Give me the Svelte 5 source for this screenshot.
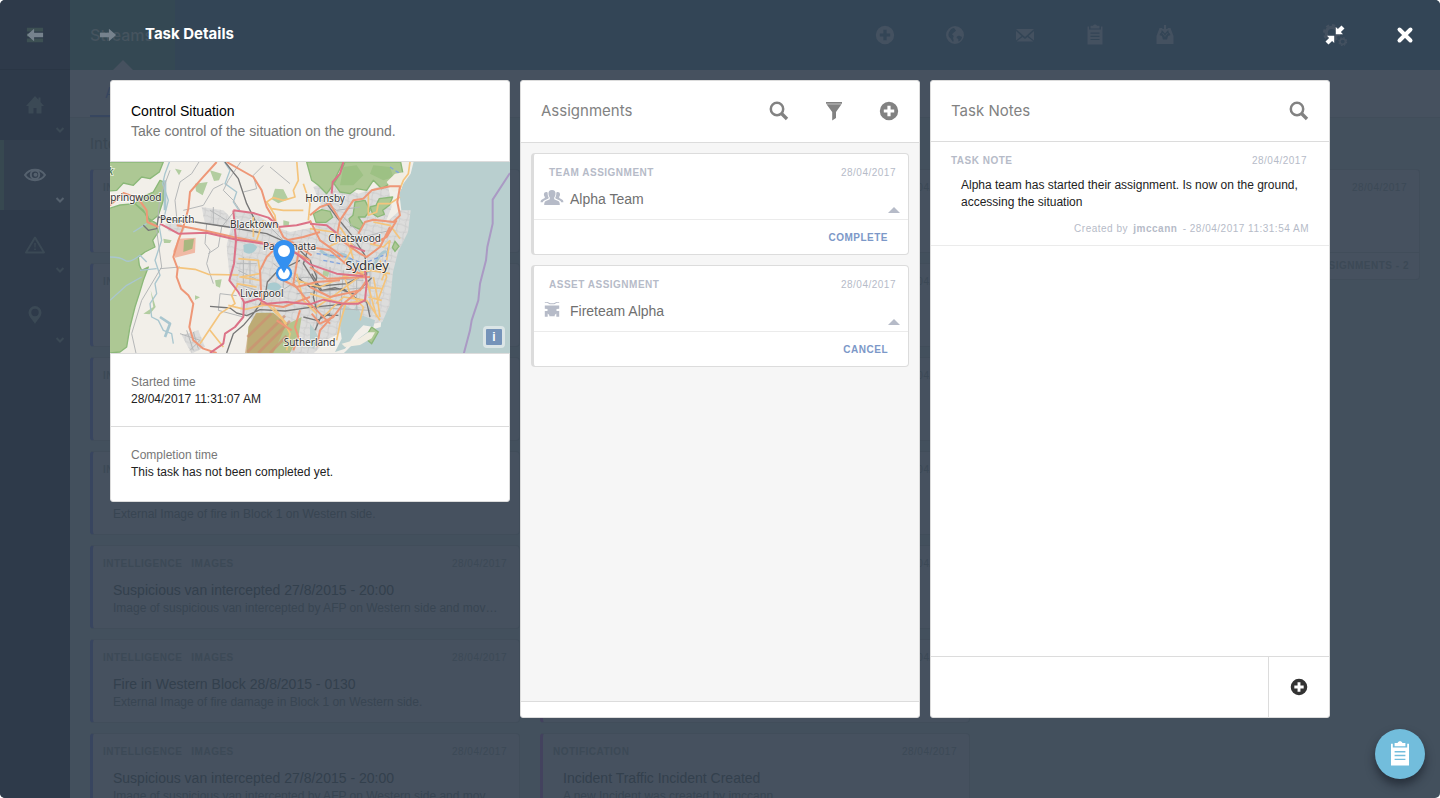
<script>
  const intel = ['INTELLIGENCE', 'IMAGES'];
  const van = {
    tags: intel,
    title: 'Suspicious van intercepted 27/8/2015 - 20:00',
    text: 'Image of suspicious van intercepted by AFP on Western side and moved to the depot.'
  };
  const fire = {
    tags: intel,
    title: 'Fire in Western Block 28/8/2015 - 0130',
    text: 'External Image of fire damage in Block 1 on Western side.'
  };
  const block = {
    tags: intel,
    title: 'Fire in Western Block',
    text: 'External Image of fire in Block 1 on Western side.'
  };
  const incident = {
    tags: ['NOTIFICATION'],
    title: 'Incident Traffic Incident Created',
    text: 'A new Incident was created by jmccann'
  };

  const streams = [
    { name: 'Intelligence', kind: 'intel', cards: [van, fire, van, block, van, fire, van] },
    { name: 'Notifications', kind: 'notice', cards: Array(7).fill(incident) },
    {
      name: 'Tasks',
      kind: 'task',
      cards: [{ tags: ['TASK'], title: 'Control Situation', text: 'Take control of the situation on the ground.', footer: 'ASSIGNMENTS - 2' }]
    }
  ];

  const assignments = [
    { type: 'TEAM ASSIGNMENT', name: 'Alpha Team', icon: 'team', action: 'COMPLETE' },
    { type: 'ASSET ASSIGNMENT', name: 'Fireteam Alpha', icon: 'asset', action: 'CANCEL' }
  ];

  const date = '28/04/2017';
  const navItems = ['home', 'eye', 'warning', 'pin'];
  const tools = ['plus', 'globe', 'mail', 'clipboard', 'inbox'];
  let note = $state('');
</script>

{#snippet icon(name, size = 20)}
  <svg class="icon" width={size} height={size} viewBox="0 0 20 20" fill="currentColor" aria-hidden="true">
    {#if name === 'menu'}
      <path d="M1 2h18v4H1zM1 8h18v4H1zM1 14h18v4H1z" />
    {:else if name === 'home'}
      <path d="M10 1 13.500 4.800V2.500h2v4.500L19 11h-2.500v7.500h-5V13h-3v5.500h-5V11H1z" />
    {:else if name === 'eye'}
      <path d="M0 10C4.500 3 15.500 3 20 10 15.500 17 4.500 17 0 10z" fill="none" stroke="currentColor" stroke-width="2" />
      <circle cx="10" cy="9.800" r="4.200" fill="none" stroke="currentColor" stroke-width="2" />
      <circle cx="10.500" cy="9.800" r="2" />
    {:else if name === 'warning'}
      <path d="M10 2.500 19 17.500H1z" fill="none" stroke="currentColor" stroke-width="2" stroke-linejoin="round" />
      <path d="M9.200 8h1.600l-.3 4.500h-1zM9.200 13.500h1.600v1.600H9.200z" />
    {:else if name === 'pin'}
      <path fill-rule="evenodd" d="M10 1a6.500 6.500 0 0 1 6.500 6.500C16.500 12 12 15 10 19 8 15 3.500 12 3.500 7.500A6.500 6.500 0 0 1 10 1zm0 2.800a3.700 3.700 0 1 0 0 7.400 3.700 3.700 0 0 0 0-7.400z" />
    {:else if name === 'plus'}
      <path fill-rule="evenodd" d="M10 .8a9.200 9.200 0 1 1 0 18.400A9.200 9.200 0 0 1 10 .8zM8.400 4.800v3.600H4.800v3.200h3.600v3.600h3.200v-3.600h3.600V8.400h-3.600V4.800z" />
    {:else if name === 'globe'}
      <path fill-rule="evenodd" d="M10 1a9 9 0 1 1 0 18 9 9 0 0 1 0-18zM5 5.500C3 8 3 11 4.500 12.500c1.500 1 2 2.500 3.500 4.500 1-1 .5-2.500 0-4 1-1.500 1-2.500-1-3.500 1-2 3-2.500 4-4L9 3C7.500 3 6 4 5 5.500zM13 11c-1.500.5-2 2-.5 2.500s.5 2 1 3c2-1 3-2.500 3.500-4.500-1.500-.5-2.500-1.500-4-1z" />
    {:else if name === 'mail'}
      <path d="M1 4h18l-9 8zM1 6l5.500 5L1 15.500zM19 6l-5.500 5 5.500 4.500zM7.500 12l2.500 2 2.500-2 6 4.500h-17z" />
    {:else if name === 'clipboard'}
      <path fill-rule="evenodd" d="M2.500 1.500h1.500V4.500h12V1.500h1.500v18h-15zM5.500 7.500v1.200h9V7.500zm0 3.200v1.200h9v-1.200zm0 3.200v1.200h9v-1.200z" />
      <path d="M5.500.8h2.500C8.500-1 11.500-1 12 .8h2.500v2.700h-9z" />
    {:else if name === 'inbox'}
      <path fill-rule="evenodd" d="M4.500 3h3l-1.500 5h2l2 3 2-3h2l-1.500-5h3l3 8v8h-17v-8zM4.500 10l2.500 1 1 3.500h4l1-3.500 2.500-1-1-2h-1.500L10 12 7 8H5.500z" />
      <path d="M8.900 0h2.200v4H14l-4 4.500L6 4h2.900z" />
    {:else if name === 'search'}
      <circle cx="8" cy="8" r="6.200" fill="none" stroke="currentColor" stroke-width="2.500" />
      <path d="m12.500 12.500 5.500 5.500" stroke="currentColor" stroke-width="3.400" />
    {:else if name === 'filter'}
      <path d="M2 1h16v1.800H2zM2.500 3.200h15L12 11v6l-3.800 2.500V11z" />
    {:else if name === 'left' || name === 'right'}
      <path transform={name === 'right' ? 'rotate(180 10 10)' : null} d="M1 10 9 3v4.500h10v5H9V17z" />
    {:else if name === 'chevron'}
      <path d="m3 6 7 7 7-7" fill="none" stroke="currentColor" stroke-width="4" />
    {:else if name === 'close'}
      <path d="m4.500 4.500 11 11m0-11-11 11" stroke="currentColor" stroke-width="4" stroke-linecap="round" />
    {:else if name === 'compress'}
      <path d="M10.800 9.200V2l2.100 2.100L16.500.5l3 3-3.600 3.600L18 9.200zM9.200 10.800V18l-2.100-2.100-3.600 3.600-3-3 3.600-3.600L2 10.800z" />
    {:else if name === 'gears'}
      <circle cx="7" cy="8" r="5" fill="none" stroke="currentColor" stroke-width="3" />
      <circle cx="7" cy="8" r="7" fill="none" stroke="currentColor" stroke-width="2" stroke-dasharray="3 2.500" />
      <circle cx="17" cy="16" r="2.500" fill="none" stroke="currentColor" stroke-width="1.500" />
      <circle cx="17" cy="16" r="3.500" fill="none" stroke="currentColor" stroke-width="1.200" stroke-dasharray="1.500 1.250" />
    {:else if name === 'asset'}
      <path d="M2 1h3l3 1.500h4L15 1h3v1h-2.500l-3 1.700h-5L4.500 2H2zM2 5h16v3.500l-3 .5v2h3v6.500h-3.200V14L13 15.500V17H7v-1.500L5.200 14v3.500H2V11h3V9l-3-.5z" />
    {/if}
  </svg>
{/snippet}

<div class="app">
  <div class="shell" aria-hidden="true">
    <nav class="sidebar">
      <div class="brand">{@render icon('menu', 18)}</div>
      {#each navItems as item (item)}
        <div class="nav-item" class:active={item === 'eye'}>
          {@render icon(item)}
          <span class="more">{@render icon('chevron', 10)}</span>
        </div>
      {/each}
    </nav>

    <div class="main">
      <header class="topbar">
        <div class="section-tab">Streams</div>
        <div class="tools">
          {#each tools as tool (tool)}
            <span class="tool">{@render icon(tool)}</span>
          {/each}
        </div>
        <span class="tool settings">{@render icon('gears', 22)}</span>
      </header>
      <div class="subtabs"><span class="subtab">All</span></div>
      <div class="streams">
        {#each streams as stream (stream.name)}
          <section class="stream {stream.kind}">
            <h2>{stream.name}</h2>
            {#each stream.cards as card}
              <article class="card">
                <div class="card-body">
                  <div class="meta">
                    <b>{#each card.tags as tag}<span class="tag">{tag}</span>{/each}</b>
                    <span>{date}</span>
                  </div>
                  <h3>{card.title}</h3>
                  <p>{card.text}</p>
                </div>
                {#if card.footer}<div class="card-footer">{card.footer}</div>{/if}
              </article>
            {/each}
          </section>
        {/each}
      </div>
    </div>
  </div>

  <div class="overlay" role="dialog" aria-labelledby="dialog-title">
    <header class="dialog-bar">
      <button class="bar-btn muted" aria-label="Back">{@render icon('left', 18)}</button>
      <button class="bar-btn forward muted" aria-label="Forward">{@render icon('right', 18)}</button>
      <h1 id="dialog-title">Task Details</h1>
      <button class="bar-btn end" aria-label="Collapse">{@render icon('compress', 20)}</button>
      <button class="bar-btn" aria-label="Close">{@render icon('close', 20)}</button>
    </header>

    <main class="panels">
      <section class="panel details">
        <div class="summary">
          <h2>Control Situation</h2>
          <p>Take control of the situation on the ground.</p>
        </div>
        <div class="map">
          <svg class="map-art" viewBox="0 5 1200 573" preserveAspectRatio="xMidYMid slice" role="img" aria-label="Map of Sydney">
            <defs>
              <pattern id="streets" width="46" height="38" patternUnits="userSpaceOnUse" patternTransform="rotate(12)">
                <path d="M0 9 20 6 46 12M0 27 24 30 46 25M12 0 9 18 14 38M33 0 36 20 31 38" fill="none" stroke="#c8c8c8" stroke-width="2" />
              </pattern>
              <path id="urban" d="M275 140 340 150 380 190 370 205 285 190zM165 190l40-8 20 20-8 18-42-8zM375 150l60 10 65 40 40 15 75-15 20-60-25-60 45-20 90 40 60-20 30 0 10 60-20 50 45-40 32 0-8 65-30 60-15 60-10 100-22 50-52 10-20-50-30 60-60 30-60 60-75-10-40-30-60-50 10-70-70-70-10-110zM400 390l50-10 30 60-50 40-40-25zM215 525l50-15 20 50-40 20z" />
            </defs>
            <rect width="1200" height="600" fill="#f2efe9" />
            <!-- sea -->
            <path d="M912 0 902 40 880 70 868 100 874 150 882 165 862 185 858 210 845 250 842 305 828 330 830 365 815 380 820 430 812 500 780 510 745 535 700 580 700 600H1200V0z" fill="#b9cfcf" />
            <!-- built-up areas -->
            <use href="#urban" fill="#dddddc" />
            <use href="#urban" fill="url(#streets)" />
            <!-- parkland -->
            <g fill="#adc894" stroke="#8bb878" stroke-width="4" stroke-linejoin="round">
              <path d="M-5 5H160L148 35 120 55 95 50 70 75 40 68 20 90-5 92zM150 60 162 65 160 120 145 165 120 185 112 165 75 130 95 110 130 95zM-5 145 30 134 75 130 100 150 112 172 140 190 145 215 128 240 135 260 105 275 85 290 88 315 95 330 115 320 100 360 88 400 75 440 60 500 50 560 30 575-5 578z" />
              <path d="M590 5H700L680 45 665 80 650 100 625 75 605 60zM705 5H872L880 45 865 75 840 70 815 85 790 60 770 90 740 85 720 100 690 95 672 70 690 40zM735 125l30-5 15 30-15 20-20 0 15 22-10 15-28-12-5-20 12-10z" />
              <path d="M610 160l25-12 25 5 8 18-20 15-30 0zM780 140l18-5 10-20 40-5-10 25-20 15 5 12-20 8-15-10z" />
            </g>
            <path d="M440 457H490L510 475 535 490 575 470 565 530 540 578H410L415 500z" fill="#b5c48c" />
            <path d="M700 20l40-5 20 30-30 30-40 0zM790 15l50 5 10 30-30 10-40-20z" fill="#9dc184" />
            <path d="M785 500l20 15-20 35-12-10 3-25zM855 243l12 15-12 15-8-12z" fill="#adc894" stroke="#8bb878" stroke-width="4" />
            <g fill="#b2cda0">
              <path d="M300 30l35 10-8 20-15 2zM255 70l38-5-15 40-20-12zM100 460l30-20-8-50 15 50-18 22zM315 360l20-3-5 25-12-5zM160 235l25 5-5 8-18 0zM195 25l20 5-8 15zM255 405l15 6-15 8z" />
              <path d="M495 85l25 2 15 30-30 12-20-12zM640 330l18 4-4 16-16-6zM520 180l18 4-2 14-16-2z" />
            </g>
            <path d="M205 235l52-3-2 45-60 15-5-20z" fill="#f0b9a4" />
            <path d="M222 240l30-5-5 30-27 10z" fill="#a9b77f" />
            <path d="M438 458H490L530 490 490 578H405l12-80z" fill="#c39b65" opacity=".6" />
            <g stroke="#cd8f72" stroke-width="8" opacity=".7">
              <path d="M412 575 525 466M445 578 540 482M480 578 530 527M412 530 484 460" />
            </g>
            <!-- inland water -->
            <g fill="none" stroke="#a9c6cf" stroke-width="4" stroke-linejoin="round">
              <path d="M180 0 165 40 158 70 175 120 165 160 148 200 155 240 135 300 150 345 135 370 140 400 120 430 125 470 145 480 160 510 185 520 190 550M340 0l20 30-15 40 35 25-10 30 20 30M0 290q30 0 45 10t45-15l20 20M0 420 50 375 95 350M90 330l50-5M70 215l40-25" />
              <path d="M165 60v90M150 470l30 20-15 40" stroke-width="8" />
              <path d="M630 270q40 30 55 15t50 30 60-5 40-30" stroke-width="9" />
            </g>
            <path d="M400 255q25-15 42 5-15 30-40 15zM475 370q25-10 40 10l-15 15-30-10z" fill="#a9cbd0" />
            <path d="M700 430l30 20 10-15 15 30 40 15-5 20-30-5-25 25-30 45-30 10 20-40-5-40zM600 490l15 20 15 30-20 25-10-10z" fill="#b9cfcf" />
            <g fill="none" stroke="#7ea3e0" stroke-width="4" stroke-dasharray="12 8">
              <path d="M840 240 825 305M840 20l30 20M620 280l90 10 50 20 60-25M640 300l50 10" />
            </g>
            <path d="M695 550l50-14 30-20 20 0-10 18-35 20-45 6zM855 40l30-5-10 50-25 10-20-30z" fill="#f1ede2" />
            <!-- local roads -->
            <g fill="none" stroke="#b5b7b8" stroke-width="3" stroke-linejoin="round">
              <path d="M270 0 245 40 210 65 195 120 202 190M180 30l-30 80-10 100 15 110-60 100-30 100 20 90M395 0 355 60 340 90 370 120 390 150M220 150l60-15 30-50 30-15M290 190l-5 60 15 20-10 40 20 60M330 400l-5 50 75 20M330 400l50 6M150 325l60-5M375 150l-40 50-10 60-30 20M460 15l-30 30 10 40-40 10M480 20l60 50" />
              <path d="M380 310h60M385 330l60 30M400 290v80M420 300v70M380 370l60 20M300 150l50 30M310 140v50" />
              <path d="M560 350l200 10M560 400l230-20M580 440l200 10M620 330v180M660 320v160M700 330l-10 150M740 300v150M780 330v130M470 190l60 60M490 310l80 60M500 400l80-50M520 340v70" />
              <path d="M210 520l60 20-30 30M230 510l20 60M250 515l15 50M620 110l60 40 70-10M700 170l60 60 80-20M660 200l80 60" />
            </g>
            <!-- railways -->
            <g fill="none" stroke="#777" stroke-width="4" stroke-linejoin="round">
              <path d="M100 195l15 15 25-5 5-35 40 10 70 5 100 15 115 20 90 40 40 40 20 50-10 60 10 40M345 5 385 55 410 130 440 190M570 300 500 335 472 365 465 410 430 460 400 495 370 520 350 578M300 438l60 5 20 15 30 8 40-18 75 4 70-10 100-10M650 130l30 40 45 55 40 60 5 60M600 250l-20 60 50 80 70-5 40 30 30 10 10 45M580 470l40 10 40-20M605 340l30 50 40-8 60 20 50-50M560 350l40 30 110-10 60-30M615 510l20-45 50 0" />
            </g>
            <!-- secondary roads -->
            <g fill="none" stroke="#f4c47c" stroke-width="5" stroke-linejoin="round">
              <path d="M560 0 565 60 550 90 555 110 520 120 490 112 470 125 485 145 520 150 580 150M470 125l25 40 5 40M580 70l20 60-5 50M205 322l50 5 40 15 90 2M385 295l60 5 5 40-60 10 60 10M380 370l60 10M270 550 330 460 375 430 365 405 385 370M300 510l40 50M355 435l50 12 80-18M470 430l50 50 20 40-10 50M900 5 895 40 880 60 868 90M870 110 840 130 805 130 800 155 775 165 775 100M790 185l50 10 30 40M600 205l70 10 40 20 20 60" />
              <path d="M560 360l70 20 70-30 80-20 60 10M600 400l100 30 70-10 40 60M620 440l60-40 80-60M640 470l60-60 70 10M700 340l20 60 40 40-10 40M740 310l30 50 30 110M810 300l20 50-30 80M680 540l10-50 20-70M430 170v60M460 180l-20 60M560 340l20 80 40 40M490 440l40 50M655 260l60-30M690 200l40 60-30 50M780 250l40 10 20-20M790 350l10 50 10 70M770 380l45 5M775 410l40 10M835 310l-20 50M840 240l-10 60" />
            </g>
            <!-- highways -->
            <g fill="none" stroke="#ee9777" stroke-width="6" stroke-linejoin="round">
              <path d="M0 135 40 98 70 108 85 115 110 150 112 185 145 200M320 5 275 55 240 95 235 145 220 200 205 240 190 290 203 325 200 350 213 385 235 405 250 430 238 500 250 540 280 565 320 578M350 5 430 50 455 90 470 140 500 190 520 230 550 250" />
              <path d="M200 195 290 212 370 230 450 245 520 258 600 300M600 165 630 140 660 130 690 180 730 120 760 115 785 90 840 78 870 78 862 125 870 165 850 185 790 178 765 185 745 220M690 180l-10 50 70 50 20 10 40-30 30-60M510 250 470 290 450 330 455 430 520 440 600 410M500 350l60 30 60-15 70 -5M600 180l30 60 70 50M600 260l60 10 70 60 40 20M860 180l-30 50-40 20" />
              <path d="M570 450 555 500 565 530 550 570M600 320l50 35 130-5M605 460l25 30 40-20 30-40 60-50M600 380l60 30 90-20 20-30M620 560l10-50 40-45M570 250l-20 120 50 60 60 60M500 480l45 30M545 245l60 40M530 240l50-10 50 -15" />
            </g>
            <!-- motorways -->
            <g fill="none" stroke="#dc7287" stroke-width="6" stroke-linejoin="round">
              <path d="M150 190 205 220 290 217 380 238 460 250 520 262 560 280 600 312M370 150 430 158 475 172 505 195M370 150 378 240 372 310 358 360 385 395 402 425 400 470 375 500 345 520 340 550 300 578M505 200 560 195 600 185M700 5 690 40 668 65 665 100M402 428 445 415 470 430 530 425 600 432 640 418 700 430 745 430 765 420 770 370 765 330M600 190 650 195 675 215 690 235M720 255l45 18M600 312l80 28 80 8" />
            </g>
            <path d="M1200 38 1148 118 1148 190 1132 260 1128 300 1110 370 1105 420 1085 480 1080 510 1060 585" fill="none" stroke="#aa9ac4" stroke-width="6" />
            <g class="place">
              <text x="-16" y="123">Springwood</text>
              <text x="150" y="187">Penrith</text>
              <text x="360" y="204">Blacktown</text>
              <text x="586" y="124">Hornsby</text>
              <text x="655" y="244">Chatswood</text>
              <text x="459" y="270">Parramatta</text>
              <text x="390" y="410">Liverpool</text>
              <text x="521" y="556">Sutherland</text>
              <text x="-34" y="43" class="park">ark</text>
              <text x="706" y="328" class="city">Sydney</text>
            </g>
            <circle cx="522" cy="339" r="21" fill="#fff" stroke="#3490f0" stroke-width="7" />
            <path fill="#3490f0" d="M522 239a32 32 0 0 1 32 32c0 24-18 39-32 68-14-29-32-44-32-68a32 32 0 0 1 32-32z" />
            <circle cx="522" cy="272" r="18" fill="#fff" />
          </svg>
          <button class="map-info" aria-label="Map attribution">i</button>
        </div>
        <dl>
          <div><dt>Started time</dt><dd>28/04/2017 11:31:07 AM</dd></div>
          <div><dt>Completion time</dt><dd>This task has not been completed yet.</dd></div>
        </dl>
      </section>

      <section class="panel">
        <header class="panel-head list-head">
          <h2>Assignments</h2>
          <button aria-label="Search assignments">{@render icon('search')}</button>
          <button aria-label="Filter assignments">{@render icon('filter')}</button>
          <button aria-label="Add assignment">{@render icon('plus')}</button>
        </header>
        <div class="assignments">
          {#each assignments as item (item.type)}
            <article class="assignment">
              <div class="meta"><b>{item.type}</b><span>{date}</span></div>
              <div class="who">
                <span class="who-icon">
                  {#if item.icon === 'team'}
                    <svg width="24" height="16" viewBox="0 0 24 16" fill="currentColor" aria-hidden="true">
                      <path d="M12 0c2.500 0 3.700 1.500 3.500 4-.1 1.500-.6 2.500-1.300 3.500v1.700l4 1.800c1.200.6 1.600 2 1.600 4H4.200c0-2 .4-3.400 1.600-4l4-1.800V7.500C9.100 6.500 8.600 5.500 8.500 4 8.300 1.500 9.500 0 12 0zM6.300 2c.9 0 1.400.4 1.400 1.200 0 1.900.2 3 1 4.300l-.2 1L4.200 10.500c-.8.5-1.200 1-1.400 1.800H.6c0-1.500.4-2.300 1.400-2.800l2.800-1.400V6.800C3.600 5.500 3.300 2 6.300 2zM17.700 2c-.9 0-1.400.4-1.400 1.200 0 1.900-.2 3-1 4.300l.2 1 4.300 2c.8.5 1.200 1 1.400 1.800h2.200c0-1.500-.4-2.300-1.400-2.800l-2.800-1.400V6.800C20.400 5.500 20.700 2 17.700 2z" />
                    </svg>
                  {:else}
                    {@render icon('asset', 18)}
                  {/if}
                </span>
                <h3>{item.name}</h3>
                <button class="caret" aria-label="Collapse {item.name}"></button>
              </div>
              <div class="actions"><button>{item.action}</button></div>
            </article>
          {/each}
        </div>
        <footer class="panel-foot"></footer>
      </section>

      <section class="panel">
        <header class="panel-head">
          <h2>Task Notes</h2>
          <button aria-label="Search notes">{@render icon('search')}</button>
        </header>
        <div class="notes">
          <article class="note">
            <div class="meta"><b>TASK NOTE</b><span>{date}</span></div>
            <p>Alpha team has started their assignment. Is now on the ground, accessing the situation</p>
            <div class="byline">Created by <b>jmccann</b> - 28/04/2017 11:31:54 AM</div>
          </article>
        </div>
        <form class="add-note" onsubmit={(e) => e.preventDefault()}>
          <input type="text" aria-label="New note" bind:value={note} />
          <button aria-label="Add note">{@render icon('plus', 18)}</button>
        </form>
      </section>
    </main>
  </div>

  <button class="fab" aria-label="Tasks">{@render icon('clipboard', 24)}</button>
</div>

<style>
  :global(body) {
    background: #fff;
    font-family: 'Liberation Sans', Arial, sans-serif;
    font-size: 12px;
    line-height: 17px;
  }
  .app * {
    box-sizing: border-box;
  }
  .app {
    position: relative;
    height: 100vh;
    overflow: hidden;
    border-radius: 5px;
    background: #43505d;
  }
  h1, h2, h3, p, dl, dd {
    margin: 0;
    font-weight: 400;
  }
  button {
    padding: 0;
    border: 0;
    background: none;
    color: inherit;
    font: inherit;
    cursor: pointer;
  }
  .icon {
    display: block;
    overflow: visible;
  }
  .meta {
    display: flex;
    justify-content: space-between;
    font-size: 10px;
    line-height: 12px;
    letter-spacing: 0.05em;
    color: #b6bbc8;
  }

  /* dimmed application behind the dialog */
  .shell {
    display: grid;
    grid-template-columns: 70px 1fr;
    height: 100%;
    color: #3a4753;
  }
  .sidebar {
    background: #2e3a4a;
  }
  .brand, .nav-item {
    position: relative;
    display: grid;
    place-items: center;
    height: 70px;
  }
  .brand {
    color: #3d5053;
    border-bottom: 1px solid #2a3645;
  }
  .nav-item {
    color: #3b4955;
  }
  .nav-item.active {
    background: #333f4e;
    border-left: 4px solid #374850;
    padding-right: 4px;
    color: #55616e;
  }
  .more {
    position: absolute;
    right: 5px;
    bottom: 5px;
  }
  .main {
    min-width: 0;
    overflow: hidden;
  }
  .topbar {
    display: flex;
    height: 70px;
    background: #334556;
  }
  .section-tab {
    position: relative;
    width: 105px;
    padding: 0 20px;
    background: #344853;
    color: #46545f;
    font: 500 16px/70px Inter, sans-serif;
  }
  .section-tab::after {
    content: '';
    position: absolute;
    left: 43px;
    bottom: 0;
    border: 10px solid transparent;
    border-top: 0;
    border-bottom-color: #46515f;
  }
  .tools {
    display: flex;
    margin: 0 100px 0 auto;
  }
  .tool {
    display: grid;
    place-items: center;
    width: 70px;
    color: #445160;
  }
  .settings {
    margin-right: 70px;
  }
  .subtabs {
    height: 48px;
    padding-left: 20px;
    background: #46515f;
    border-bottom: 1px solid #414d5a;
  }
  .subtab {
    display: block;
    width: 60px;
    border-bottom: 2px solid #37465f;
    padding-left: 15px;
    color: #37465f;
    font: 14px/45px Inter, sans-serif;
  }
  .streams {
    display: grid;
    grid-template-columns: repeat(3, 1fr);
    gap: 20px;
    padding: 0 20px;
  }
  .stream {
    min-width: 0;
  }
  .stream h2 {
    font: 15px/51px Inter, sans-serif;
  }
  .card {
    margin-bottom: 10px;
    border: 1px solid #414d5a;
    border-left: 3px solid #38455f;
    border-radius: 4px;
    background: #46515f;
  }
  .notice .card {
    border-left-color: #43425e;
  }
  .task .card {
    border-left-color: #414d5a;
  }
  .card-body {
    height: 82px;
    padding: 12px 12px 0 10px;
  }
  .card .meta {
    color: #3c4956;
  }
  .tag {
    margin-right: 9px;
  }
  .card h3 {
    padding: 11px 0 0 10px;
    color: #33404d;
    font-size: 14px;
    line-height: 18px;
  }
  .card p {
    margin: 0 5px 0 10px;
    overflow: hidden;
    text-overflow: ellipsis;
    white-space: nowrap;
    line-height: 18px;
    color: #384552;
  }
  .card-footer {
    padding-right: 10px;
    border-top: 1px solid #414d5a;
    text-align: right;
    font-size: 10px;
    font-weight: 700;
    line-height: 26px;
    letter-spacing: 0.05em;
    color: #3c4956;
  }

  /* dialog */
  .overlay {
    position: absolute;
    inset: 0;
    display: flex;
    flex-direction: column;
  }
  .dialog-bar {
    display: flex;
    align-items: center;
    height: 70px;
    color: #fff;
  }
  .bar-btn {
    display: grid;
    place-items: center;
    width: 70px;
    height: 70px;
  }
  .forward {
    width: 75px;
  }
  .muted {
    color: #76828d;
  }
  .end {
    margin-left: auto;
  }
  .dialog-bar h1 {
    padding-bottom: 2px;
    font: 700 15px/20px Inter, sans-serif;
  }
  .panels {
    flex: 1;
    min-height: 0;
    display: grid;
    grid-template-columns: repeat(3, 1fr);
    gap: 10px;
    padding: 10px 110px 80px;
  }
  .panel {
    display: flex;
    flex-direction: column;
    min-width: 0;
    border: 1px solid #dcdcdc;
    border-radius: 3px;
    background: #fff;
  }
  .details {
    align-self: start;
  }
  .summary {
    padding: 20px;
    border-bottom: 1px solid #dcdcdc;
    font-size: 14px;
    line-height: 20px;
    color: #777;
  }
  .summary h2 {
    font-size: 14px;
    color: #000;
  }
  .map {
    position: relative;
    height: 191px;
    margin: 0 -1px;
  }
  .map-art {
    display: block;
    width: 100%;
    height: 100%;
  }
  .place text {
    font-family: 'Noto Sans', sans-serif;
    font-size: 30px;
    fill: #333;
    stroke: #fff;
    stroke-opacity: 0.75;
    stroke-width: 5px;
    paint-order: stroke;
  }
  .place .city {
    font-size: 39px;
  }
  .place .park {
    font-style: italic;
    fill: #3a6635;
  }
  .map-info {
    position: absolute;
    right: 5px;
    bottom: 5px;
    width: 22px;
    height: 22px;
    border: 3px solid #dbe5e6;
    border-radius: 4px;
    background: #7593b9;
    color: #fff;
    font-weight: 700;
    line-height: 16px;
  }
  dl > div {
    padding: 20px 20px 18px;
    border-top: 1px solid #dcdcdc;
  }
  dl > div:last-child {
    padding-bottom: 20px;
  }
  dt {
    color: #777;
  }
  dd {
    color: #222;
  }
  .panel-head {
    display: flex;
    align-items: center;
    gap: 35px;
    height: 61px;
    padding: 0 20px;
    border-bottom: 1px solid #dcdcdc;
    color: #828282;
  }
  .list-head {
    height: 62px;
    padding-bottom: 1px;
  }
  .panel-head h2 {
    margin-right: auto;
    font: 15px/20px Inter, sans-serif;
  }
  .assignments {
    flex: 1;
    padding: 10px;
    background: #f6f6f6;
  }
  .assignment {
    margin-bottom: 10px;
    padding-top: 13px;
    border: 1px solid #dcdcdc;
    border-left-width: 3px;
    border-radius: 4px;
    background: #fff;
  }
  .assignment .meta {
    padding: 0 12px 0 15px;
  }
  .who {
    display: flex;
    align-items: center;
    height: 40px;
    padding: 0 8px 0 6px;
  }
  .who-icon {
    display: grid;
    place-items: center;
    width: 24px;
    margin-right: 6px;
    padding-bottom: 2px;
    color: #b6bbc8;
  }
  .who h3 {
    margin-right: auto;
    font-size: 14px;
    line-height: 20px;
    color: #707070;
  }
  .caret {
    align-self: flex-end;
    margin-bottom: 6px;
    border: 6px solid transparent;
    border-top: 0;
    border-bottom-color: #b6bbc8;
  }
  .actions {
    height: 35px;
    padding: 0 20px;
    border-top: 1px solid #ebebeb;
    text-align: right;
    font-size: 10px;
    font-weight: 700;
    line-height: 36px;
    letter-spacing: 0.05em;
    color: #7c98c8;
  }
  .actions button {
    display: block;
    margin-left: auto;
    letter-spacing: inherit;
  }
  .panel-foot {
    height: 16px;
    border-top: 1px solid #dcdcdc;
  }
  .notes {
    flex: 1;
  }
  .note {
    padding: 13px 20px 10px;
    border-bottom: 1px solid #ebebeb;
  }
  .note .meta {
    padding-right: 2px;
  }
  .note p {
    padding: 10px 0 12px 10px;
    color: #222;
  }
  .byline {
    text-align: right;
    font-size: 10px;
    line-height: 12px;
    letter-spacing: 0.05em;
    color: #b6bbc8;
  }
  .byline b {
    margin: 0 2px;
  }
  .add-note {
    display: flex;
    height: 61px;
    border-top: 1px solid #dcdcdc;
  }
  .add-note input {
    flex: 1;
    min-width: 0;
    padding: 0 20px;
    border: 0;
    background: none;
    font: inherit;
    outline: 0;
  }
  .add-note button {
    display: grid;
    place-items: center;
    width: 61px;
    border-left: 1px solid #dcdcdc;
    color: #333;
  }
  .fab {
    position: absolute;
    right: 15px;
    bottom: 19px;
    display: grid;
    place-items: center;
    width: 50px;
    height: 50px;
    border-radius: 50%;
    background: #72bddc;
    color: #fff;
    box-shadow: 0 6px 10px rgba(20, 25, 35, 0.6);
  }
</style>
